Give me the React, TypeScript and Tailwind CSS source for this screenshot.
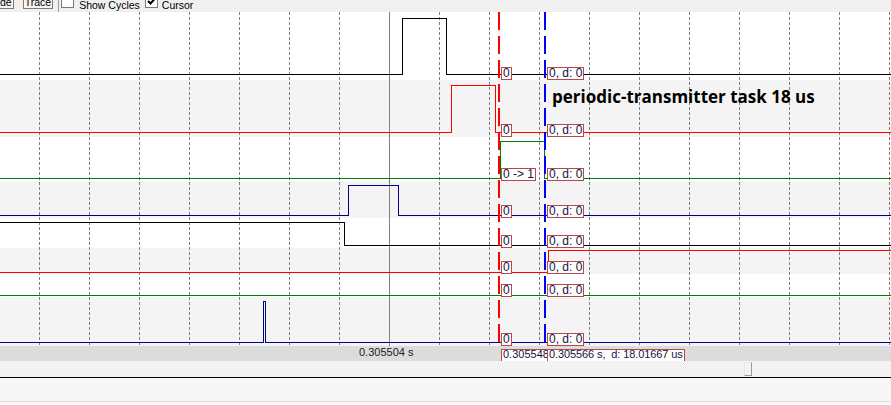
import React from "react";

type Row = { h: string; bg: string; a: string; b: string; note?: boolean };

const rows: Row[] = [
  { h: "h-[68px]", bg: "bg-white", a: "0", b: "0, d: 0" },
  { h: "h-[57px]", bg: "bg-[#f4f4f4]", a: "0", b: "0, d: 0", note: true },
  { h: "h-[44px]", bg: "bg-white", a: "0 -> 1", b: "0, d: 0" },
  { h: "h-[37px]", bg: "bg-[#f4f4f4]", a: "0", b: "0, d: 0" },
  { h: "h-[30px]", bg: "bg-white", a: "0", b: "0, d: 0" },
  { h: "h-[26px]", bg: "bg-[#f4f4f4]", a: "0", b: "0, d: 0" },
  { h: "h-[23px]", bg: "bg-white", a: "0", b: "0, d: 0" },
  { h: "h-[49px]", bg: "bg-[#f4f4f4]", a: "0", b: "0, d: 0" },
];

const grid = Array.from({ length: 18 }, (_, i) => 39 + 50 * i).filter((x) => x !== 389);

const signals: { d: string; c: string }[] = [
  { d: "M0 62.5 H402.5 V6.5 H446.5 V62.5 H891", c: "#000000" },
  { d: "M0 120.5 H451.5 V73.5 H495.5 V120.5 H891", c: "#ff0000" },
  { d: "M0 166.5 H500.5 V129.5 H544.5 V166.5 H891", c: "#008000" },
  { d: "M0 203.5 H348.5 V173.5 H398.5 V203.5 H891", c: "#000080" },
  { d: "M0 210.5 H344.5 V233.5 H891", c: "#000000" },
  { d: "M0 260.5 H548.5 V238.5 H891", c: "#ff0000" },
  { d: "M0 283.5 H891", c: "#008000" },
  { d: "M0 330.5 H263.5 V289.5 H265.5 V330.5 H891", c: "#000080" },
];

function Check({ checked }: { checked?: boolean }) {
  return (
    <div className="mb-[4px] h-[13px] w-[13px] shrink-0 border border-[#7a7a7a] bg-white">
      {checked && (
        <svg width="11" height="11" viewBox="0 0 11 11">
          <path d="M2 5 L4.5 7.5 L9 2.5" fill="none" stroke="#000" strokeWidth="2" />
        </svg>
      )}
    </div>
  );
}

export default function App() {
  return (
    <div className="flex h-[405px] w-[891px] flex-col overflow-hidden bg-white font-['Liberation_Sans',Arial,sans-serif] text-black">
      {/* toolbar */}
      <div className="h-[12px] shrink-0 overflow-hidden bg-[#f0f0f0]">
        <div className="flex h-[12px] items-end text-[10.5px] leading-[11px]">
          <div className="-ml-[3px] mb-[3px] flex h-[18px] items-end border border-[#7a7a7a] bg-[#f4f4f4] pl-[2px] pr-[1px]">
            <span>de</span>
          </div>
          <div className="mb-[3px] ml-[9px] flex h-[18px] items-end border border-[#7a7a7a] bg-[#f4f4f4] px-[1px]">
            <span>Trace</span>
          </div>
          <div className="ml-[5px] h-[12px] w-[1px] bg-[#a0a0a0]" />
          <div className="ml-[2px]">
            <Check />
          </div>
          <span className="mb-[1px] ml-[5px]">Show Cycles</span>
          <div className="ml-[5px]">
            <Check checked />
          </div>
          <span className="mb-[1px] ml-[4px]">Cursor</span>
        </div>
      </div>

      {/* chart */}
      <div className="relative h-[334px] shrink-0">
        <div className="flex flex-col">
          {rows.map((r, i) => (
            <div key={i} className={`relative ${r.h} ${r.bg}`}>
              {r.note && (
                <div className="absolute left-[552px] top-[8px] z-10 whitespace-nowrap font-['Open_Sans',sans-serif] text-[17px] font-bold leading-[17px] text-black">
                  periodic-transmitter task 18 us
                </div>
              )}
              <div className="absolute bottom-0 left-[501px] z-10 h-[13px] whitespace-nowrap border border-[#b44a4a] bg-white px-[1px] text-[12px] leading-[11px] text-[#14143c]">
                {r.a}
              </div>
              <div className="absolute bottom-0 left-[547px] z-10 h-[13px] whitespace-nowrap border border-[#b44a4a] bg-white px-[1px] text-[12px] leading-[11px] text-[#14143c]">
                {r.b}
              </div>
            </div>
          ))}
        </div>
        <svg
          className="absolute left-0 top-0"
          width="891"
          height="334"
          viewBox="0 0 891 334"
          shapeRendering="crispEdges"
        >
          {grid.map((x) => (
            <line key={x} x1={x + 0.5} y1="0" x2={x + 0.5} y2="334" stroke="#7f7f7f" strokeDasharray="3 2" />
          ))}
          <line x1="389.5" y1="0" x2="389.5" y2="334" stroke="#808080" />
          {signals.map((s, i) => (
            <path key={i} d={s.d} fill="none" stroke={s.c} strokeWidth="1" />
          ))}
          <line x1="499" y1="0" x2="499" y2="334" stroke="#ff0000" strokeWidth="2" strokeDasharray="18 6" />
          <line x1="545" y1="0" x2="545" y2="334" stroke="#0000ff" strokeWidth="2" strokeDasharray="18 6" />
        </svg>
      </div>

      {/* time bar */}
      <div className="relative h-[15px] shrink-0 overflow-hidden bg-[#dcdcdc] text-[11px]">
        <div className="absolute left-[359px] top-[1px] leading-[11px] text-[#202020]">0.305504 s</div>
        <div className="absolute left-[501px] top-[3px] h-[16px] w-[50px] whitespace-nowrap border border-[#b44a4a] bg-white px-[1px] leading-[9px] text-[#14143c]">
          0.305548
        </div>
        <div className="absolute left-[547px] top-[3px] h-[16px] whitespace-nowrap border border-[#b44a4a] bg-white px-[1px] leading-[9px] tracking-[-0.1px] text-[#14143c]">
          0.305566 s,&nbsp; d: 18.01667 us
        </div>
      </div>

      {/* scroll area */}
      <div className="h-[16px] shrink-0 bg-[#f3f3f3] bg-[image:repeating-conic-gradient(#ececec_0%_25%,#fafafa_0%_50%)] bg-[length:2px_2px] pt-[1px]">
        <div className="ml-[744px] h-[14px] w-[8px] border border-[#e6e6e6] border-b-[#9a9a9a] border-r-[#9a9a9a] bg-[#f4f4f4]" />
      </div>
      <div className="h-[1px] shrink-0 bg-black" />
      <div className="h-[23px] shrink-0 bg-[#f7f7f7]" />
      <div className="h-[1px] shrink-0 bg-[#dedede]" />
      <div className="flex-1 bg-[#f7f7f7]" />
    </div>
  );
}
